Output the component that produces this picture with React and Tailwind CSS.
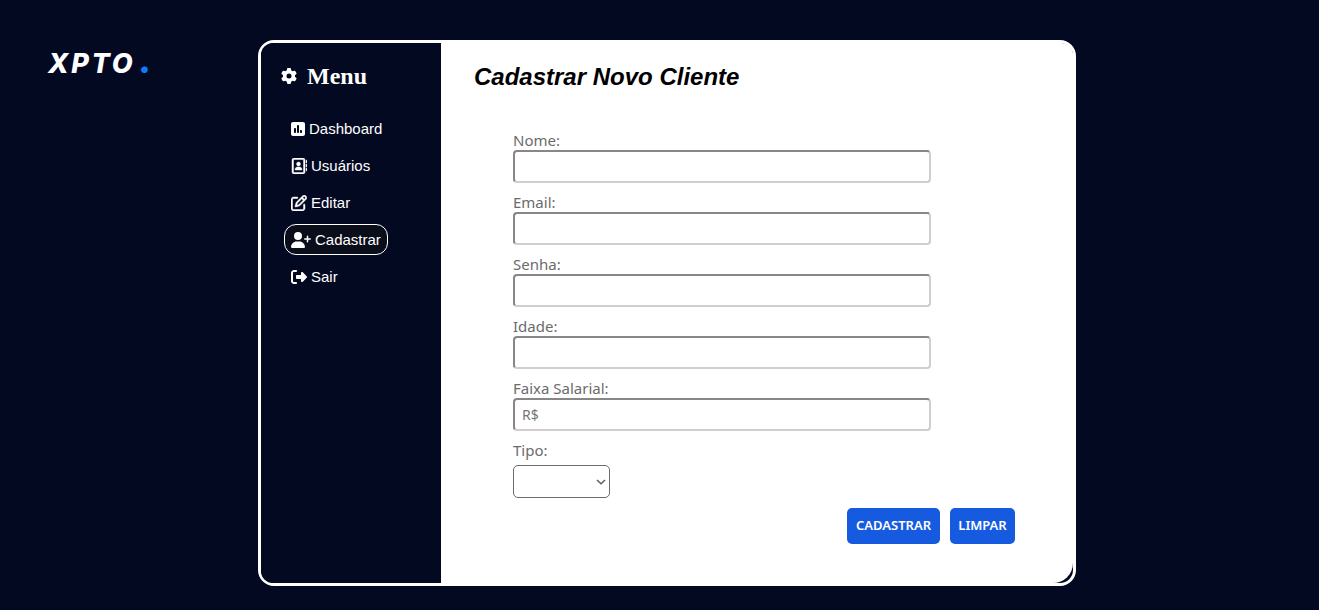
import { FaGear, FaRegAddressBook, FaRegPenToSquare, FaRightFromBracket, FaSquarePollVertical, FaUserPlus } from 'react-icons/fa6';

const links = [
  { label: 'Dashboard', Icon: FaSquarePollVertical, size: 'h-4 w-3.5' },
  { label: 'Usuários', Icon: FaRegAddressBook, size: 'size-4 stroke-current stroke-[14px]' },
  { label: 'Editar', Icon: FaRegPenToSquare, size: 'size-4 stroke-current stroke-[14px]' },
  { label: 'Cadastrar', Icon: FaUserPlus, size: 'h-4 w-5', active: true },
  { label: 'Sair', Icon: FaRightFromBracket, size: 'size-4' },
];

const fields = [
  { id: 'nome', label: 'Nome:', type: 'text' },
  { id: 'email', label: 'Email:', type: 'email' },
  { id: 'senha', label: 'Senha:', type: 'password' },
  { id: 'idade', label: 'Idade:', type: 'text' },
  { id: 'faixa', label: 'Faixa Salarial:', type: 'text', placeholder: 'R$' },
];

function Sidebar() {
  return (
    <nav className="w-[180px] shrink-0 rounded-l-xl bg-[#040922] pt-5 text-white">
      <h2 className="flex items-center gap-2.5 pl-5 font-['Liberation_Serif',serif] text-2xl leading-[26px] font-bold">
        <FaGear className="size-4" aria-hidden="true" />
        Menu
      </h2>
      <ul className="mt-6 flex flex-col gap-1.5 pl-[23px] font-['Liberation_Sans',sans-serif] text-[15px] leading-5">
        {links.map(({ label, Icon, size, active }) => (
          <li key={label} className="flex">
            <a
              href={`#${label.toLowerCase()}`}
              aria-current={active ? 'page' : undefined}
              className={`flex h-[31px] items-center gap-1 rounded-xl border px-1.5 ${active ? 'border-white bg-[#0a0d1a]' : 'border-transparent'}`}
            >
              <Icon className={size} aria-hidden="true" />
              {label}
            </a>
          </li>
        ))}
      </ul>
    </nav>
  );
}

function ClientForm() {
  return (
    <form className="mt-10 pr-[58px] pl-[39px] font-['Noto_Sans',sans-serif] text-[#6b6b6b]">
      <div className="flex max-w-[418px] flex-col gap-2.5">
        {fields.map(({ id, label, type, placeholder }) => (
          <div key={id} className="flex flex-col">
            <label htmlFor={id} className="text-[15px] leading-[19px]">{label}</label>
            <input
              id={id}
              type={type}
              placeholder={placeholder}
              className="h-[33px] w-full rounded border-2 border-t-[#8a8587] border-r-[#d2cdce] border-b-[#d2cdce] border-l-[#8a8587] bg-white px-[7px] text-sm placeholder:text-[#757575]"
            />
          </div>
        ))}
        <div className="flex flex-col items-start gap-[5px]">
          <label htmlFor="tipo" className="text-[15px] leading-[19px]">Tipo:</label>
          <div className="relative">
            <select id="tipo" defaultValue="" className="block h-[33px] w-[97px] appearance-none rounded-[5px] border border-[#6b6b6b] bg-white px-2 text-[13px]">
              <option value=""></option>
            </select>
            <svg viewBox="0 0 10 6" className="pointer-events-none absolute top-3.5 right-1 h-1.5 w-2.5 fill-none stroke-[#5f5f5f] stroke-[1.5px]" aria-hidden="true">
              <path d="M1 1l4 3.8L9 1" />
            </svg>
          </div>
        </div>
      </div>
      <div className="mt-2.5 flex justify-end gap-2.5 text-[13px] font-semibold text-white">
        <button type="submit" className="h-9 w-[93px] rounded-[5px] bg-[#165bdf]">CADASTRAR</button>
        <button type="reset" className="h-9 w-[65px] rounded-[5px] bg-[#165bdf]">LIMPAR</button>
      </div>
    </form>
  );
}

export default function App() {
  return (
    <div className="flex min-h-screen items-start bg-[#040922]">
      <header className="w-[258px] shrink-0 pt-[42px] pl-12">
        <a href="#inicio" className="flex items-baseline gap-1 font-['Inter',sans-serif] text-[27px] leading-9 font-extrabold tracking-widest text-white italic">
          XPTO<span className="text-4xl leading-9 text-[#0a7cff]">.</span>
        </a>
      </header>
      <div className="mt-10 mr-6 flex min-h-[546px] w-full max-w-[818px] rounded-2xl border-[3px] border-white bg-[#040922]">
        <Sidebar />
        <main className="grow rounded-tr-xl rounded-br-[20px] bg-white pt-5 pb-9 pl-[33px]">
          <h1 className="font-['Liberation_Sans',sans-serif] text-2xl leading-7 font-bold text-black italic">Cadastrar Novo Cliente</h1>
          <ClientForm />
        </main>
      </div>
    </div>
  );
}
